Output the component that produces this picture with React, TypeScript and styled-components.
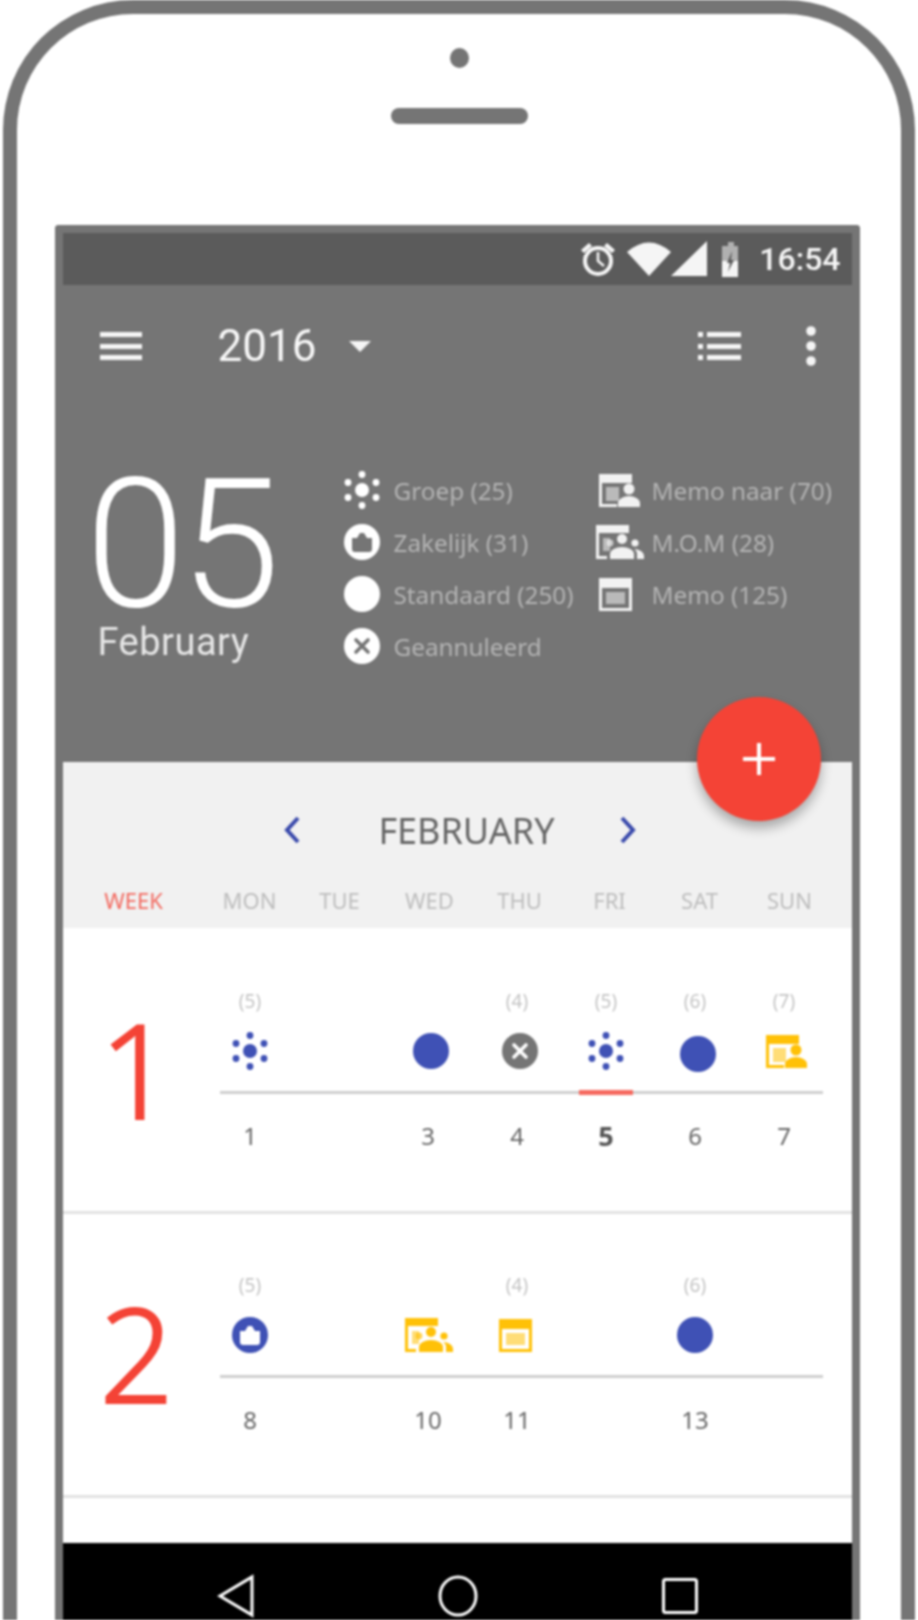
import { FC } from "react";
import styled, { createGlobalStyle } from "styled-components";

const GRAY = "#757575";
const BLUE = "#3f51b5";
const YELLOW = "#ffc107";
const RED = "#f44336";

const GlobalStyle = createGlobalStyle`
	html, body {
		margin: 0;
		padding: 0;
		background: #fff;
		font-family: "Noto Sans", "Open Sans", sans-serif;
	}
`;

const Page = styled.div`
	width: 918px;
	height: 1620px;
	overflow: hidden;
	filter: blur(0.9px);
`;

const Phone = styled.div`
	box-sizing: border-box;
	width: 912px;
	height: 1620px;
	margin-left: 3px;
	border: 14.5px solid ${GRAY};
	border-bottom: none;
	border-radius: 130px 130px 0 0;
	display: flex;
	flex-direction: column;
	align-items: center;
`;

const Camera = styled.div`
	width: 19px;
	height: 20px;
	margin-top: 34px;
	border-radius: 50%;
	background: ${GRAY};
`;

const Speaker = styled.div`
	width: 137px;
	height: 16px;
	margin-top: 40px;
	border-radius: 9px;
	background: ${GRAY};
`;

const Screen = styled.div`
	box-sizing: border-box;
	width: 805px;
	height: 1395px;
	margin: 101px 4px 0 0;
	border: 8px solid ${GRAY};
	border-bottom: none;
	border-radius: 4px 4px 0 0;
	display: flex;
	flex-direction: column;
	position: relative;
`;

const StatusBar = styled.div`
	height: 52px;
	flex: none;
	background: #5b5b5b;
	display: flex;
	align-items: center;
	justify-content: flex-end;
	padding-right: 11px;
	color: #f5f5f5;
`;

const StatusTime = styled.span`
	font-family: Roboto, sans-serif;
	font-weight: 500;
	font-size: 32px;
	margin-left: 16px;
`;

const Header = styled.div`
	height: 477px;
	flex: none;
	background: ${GRAY};
	color: #fff;
`;

const Toolbar = styled.div`
	height: 121px;
	display: flex;
	align-items: center;
	padding: 0 36px 0 37px;
	margin-bottom: 4px;
`;

const Year = styled.span`
	font-family: Roboto, sans-serif;
	font-size: 44px;
	margin-left: 76px;
	color: #f7f7f7;
`;

const Caret = styled.div`
	width: 0;
	height: 0;
	margin: 2px auto 0 33px;
	border-left: 11px solid transparent;
	border-right: 11px solid transparent;
	border-top: 11px solid #f5f5f5;
`;

const Hero = styled.div`
	display: flex;
`;

const DateBlock = styled.div`
	width: 281px;
	flex: none;
	padding: 60px 0 0 23px;
	box-sizing: border-box;
`;

const DayNumber = styled.div`
	font-family: Roboto, sans-serif;
	font-weight: 300;
	font-size: 180px;
	line-height: 150px;
	letter-spacing: -5px;
`;

const MonthName = styled.div`
	font-family: Roboto, sans-serif;
	font-weight: 400;
	font-size: 38px;
	line-height: 44px;
	margin-left: 12px;
	letter-spacing: 0.5px;
	color: #e6e6e6;
`;

const Legend = styled.div`
	display: grid;
	grid-template-rows: repeat(4, 52px);
	grid-template-columns: 252px auto;
	grid-auto-flow: column;
	margin-top: 54px;
`;

const LegendItem = styled.div`
	display: flex;
	align-items: center;
	font-size: 24.3px;
	color: #b4b4b4;
`;

const LegendIconBox = styled.div<{ $width: number; $inset?: number }>`
	width: ${(p) => p.$width}px;
	padding-left: ${(p) => p.$inset ?? 0}px;
	box-sizing: border-box;
	flex: none;
	display: flex;
`;

const Content = styled.div`
	flex: 1;
	min-height: 0;
	background: #fff;
	position: relative;
	overflow: hidden;
`;

const Fab = styled.div`
	position: absolute;
	top: 464px;
	left: 634px;
	z-index: 2;
	width: 124px;
	height: 124px;
	border-radius: 50%;
	background: ${RED};
	box-shadow: 0 7px 12px rgba(0, 0, 0, 0.3);
	display: flex;
	align-items: center;
	justify-content: center;
`;

const CalendarHead = styled.div`
	height: 166px;
	background: #f1f1f1;
	box-sizing: border-box;
	padding-top: 46px;
`;

const MonthRow = styled.div`
	display: flex;
	align-items: center;
	justify-content: center;
	height: 44px;
	padding-left: 6px;
`;

const MonthTitle = styled.div`
	font-size: 36px;
	color: #666;
	margin: 0 64px 0 77px;
`;

const WeekdayRow = styled.div`
	display: grid;
	grid-template-columns: 142px repeat(7, 90px);
	margin-top: 33px;
	font-size: 22px;
	line-height: 30px;
	color: #bdbdbd;
	text-align: center;
`;

const WeekLabel = styled.div`
	color: #f26a60;
`;

const WeekList = styled.div`
	padding-top: 2px;
`;

const WeekRow = styled.div`
	display: grid;
	grid-template-columns: 143px repeat(7, 89px);
	box-sizing: border-box;
	height: 284px;
	grid-template-rows: 30px 70px 12px 74px;
	padding-top: 56px;
	border-bottom: 3px solid #e2e2e2;
`;

const WeekNumber = styled.div`
	grid-column: 1;
	grid-row: 1 / -1;
	display: flex;
	align-items: center;
	justify-content: center;
	padding: 0 0 20px 5px;
	font-weight: 300;
	font-size: 130px;
	line-height: 1;
	color: ${RED};
	-webkit-text-stroke: 2px ${RED};
`;

const Count = styled.div<{ $col: number }>`
	grid-row: 1;
	grid-column: ${(p) => p.$col + 2};
	text-align: center;
	font-size: 19px;
	line-height: 30px;
	color: #c4c4c4;
`;

const IconCell = styled.div<{ $col: number; $nudge?: number; $drop?: number }>`
	grid-row: 2;
	grid-column: ${(p) => p.$col + 2};
	display: flex;
	align-items: center;
	justify-content: center;
	transform: translate(${(p) => p.$nudge ?? 0}px, ${(p) => p.$drop ?? 0}px);
`;

const WeekLine = styled.div`
	grid-row: 3;
	grid-column: 2 / -1;
	align-self: center;
	height: 3px;
	margin: 0 6px 0 14px;
	background: #cfcfcf;
`;

const TodayMark = styled.div`
	grid-row: 3;
	grid-column: 6;
	align-self: center;
	justify-self: center;
	width: 54px;
	height: 5px;
	background: #f66a60;
`;

const DayCell = styled.div<{ $col: number; $today?: boolean }>`
	grid-row: 4;
	grid-column: ${(p) => p.$col + 2};
	text-align: center;
	align-self: center;
	font-size: ${(p) => (p.$today ? 27 : 24)}px;
	font-weight: ${(p) => (p.$today ? 700 : 400)};
	color: ${(p) => (p.$today ? "#555" : "#666")};
`;

const NavBar = styled.div`
	position: absolute;
	left: 0;
	right: 0;
	bottom: 0;
	height: 77px;
	background: #000;
	display: flex;
	align-items: center;
	padding: 28px 0 0 154px;
	box-sizing: border-box;
`;

const NavGap = styled.div<{ $width: number }>`
	width: ${(p) => p.$width}px;
`;

type IconProps = { color: string; hole?: string };

const Sun: FC<IconProps> = ({ color }) => (
	<svg width="36" height="38" viewBox="0 0 36 38" fill={color}>
		<circle cx="18" cy="19" r="7" />
		<circle cx="18" cy="3.5" r="3.4" />
		<circle cx="18" cy="34.5" r="3.4" />
		<circle cx="4" cy="11.5" r="3.4" />
		<circle cx="32" cy="11.5" r="3.4" />
		<circle cx="4" cy="26.5" r="3.4" />
		<circle cx="32" cy="26.5" r="3.4" />
	</svg>
);

const Bag: FC<IconProps> = ({ color, hole }) => (
	<svg width="36" height="36" viewBox="0 0 36 36">
		<circle cx="18" cy="18" r="18" fill={color} />
		<path
			d="M8 14h5l3-5h4l3 5h5v11a3 3 0 0 1-3 3H11a3 3 0 0 1-3-3z"
			fill={hole}
		/>
	</svg>
);

const Dot: FC<IconProps> = ({ color }) => (
	<svg width="36" height="36" viewBox="0 0 36 36">
		<circle cx="18" cy="18" r="18" fill={color} />
	</svg>
);

const Cancelled: FC<IconProps> = ({ color, hole }) => (
	<svg width="36" height="36" viewBox="0 0 36 36">
		<circle cx="18" cy="18" r="18" fill={color} />
		<path
			d="M12 12l12 12M24 12L12 24"
			stroke={hole}
			strokeWidth="3.6"
			strokeLinecap="round"
		/>
	</svg>
);

const MemoTo: FC<IconProps> = ({ color }) => (
	<svg width="42" height="33" viewBox="0 0 42 33" fill={color}>
		<path d="M0 0h33v9H3v21h15v3H0z" />
		<rect x="7" y="13" width="13" height="14" opacity="0.55" />
		<circle cx="30" cy="15" r="5.5" />
		<path d="M19 33v-4c0-4 6-7 11-7s11 3 11 7v4z" />
	</svg>
);

const Mom: FC<IconProps> = ({ color }) => (
	<svg width="48" height="34" viewBox="0 0 48 34" fill={color}>
		<path d="M0 0h33v8H3v23h8v3H0z" />
		<rect x="7" y="13" width="7" height="13" opacity="0.55" />
		<circle cx="26" cy="14" r="5" />
		<path d="M14 34v-5c0-4 6-7 12-7s12 3 12 7v5z" />
		<circle cx="39" cy="18" r="3.6" />
		<path d="M41 34v-5c0-2-1-4-3-5 5 0 10 3 10 7v3z" />
		<circle cx="14" cy="18" r="3.4" opacity="0.7" />
	</svg>
);

const Memo: FC<IconProps> = ({ color }) => (
	<svg width="33" height="33" viewBox="0 0 33 33" fill={color}>
		<path fillRule="evenodd" d="M0 0h33v33H0zM3 10v20h27V10z" />
		<rect x="7" y="14" width="19" height="12" opacity="0.55" />
	</svg>
);

const Chevron: FC<{ left?: boolean }> = ({ left }) => (
	<svg width="18" height="28" viewBox="0 0 18 28" fill="none">
		<path
			d={left ? "M15 2L4 14l11 12" : "M3 2l11 12L3 26"}
			stroke="#3949ab"
			strokeWidth="4"
		/>
	</svg>
);

const Bars: FC = () => (
	<svg width="42" height="28" viewBox="0 0 42 28" fill="#f5f5f5">
		<rect y="0" width="42" height="5" />
		<rect y="12" width="42" height="5" />
		<rect y="23" width="42" height="5" />
	</svg>
);

const ListIcon: FC = () => (
	<svg width="43" height="28" viewBox="0 0 43 28" fill="#f5f5f5">
		<rect y="0" width="5" height="5" />
		<rect y="12" width="5" height="5" />
		<rect y="23" width="5" height="5" />
		<rect x="9" y="0" width="34" height="5" />
		<rect x="9" y="12" width="34" height="5" />
		<rect x="9" y="23" width="34" height="5" />
	</svg>
);

const MoreDots: FC = () => (
	<svg width="10" height="40" viewBox="0 0 10 40" fill="#f5f5f5">
		<circle cx="5" cy="5" r="4.8" />
		<circle cx="5" cy="20" r="4.8" />
		<circle cx="5" cy="35" r="4.8" />
	</svg>
);

const StatusIcons: FC = () => (
	<svg width="164" height="36" viewBox="0 0 164 36" fill="#f5f5f5">
		<circle cx="19" cy="20" r="13" fill="none" stroke="#f5f5f5" strokeWidth="4" />
		<path d="M19 11v9l6 5" fill="none" stroke="#f5f5f5" strokeWidth="2.6" />
		<path d="M2 9l8-7 3 3-8 7zM36 9l-8-7-3 3 8 7z" />
		<path d="M48 11Q70-8 92 11L70 35z" />
		<path d="M92 35L128 0v35z" />
		<path d="M149 5V1h6v4h4v31h-16V5z" opacity="0.55" />
		<path d="M143 20h16v16h-16z" />
		<path d="M153 10l-5 12h3l-2 9 6-12h-3z" fill="#5b5b5b" />
	</svg>
);

const Plus: FC = () => (
	<svg width="32" height="32" viewBox="0 0 32 32" fill="#fff">
		<rect x="14" width="4" height="32" />
		<rect y="14" width="32" height="4" />
	</svg>
);

const legendLeft = [
	{ text: "Groep (25)", Icon: Sun },
	{ text: "Zakelijk (31)", Icon: Bag },
	{ text: "Standaard (250)", Icon: Dot },
	{ text: "Geannuleerd", Icon: Cancelled },
];

const legendRight = [
	{ text: "Memo naar (70)", Icon: MemoTo, inset: 3 },
	{ text: "M.O.M (28)", Icon: Mom, inset: 0 },
	{ text: "Memo (125)", Icon: Memo, inset: 3 },
];

const weekdays = ["MON", "TUE", "WED", "THU", "FRI", "SAT", "SUN"];

const weeks = [
	{
		number: 1,
		counts: [
			[0, 5],
			[3, 4],
			[4, 5],
			[5, 6],
			[6, 7],
		],
		icons: [
			{ col: 0, Icon: Sun, color: BLUE },
			{ col: 2, Icon: Dot, color: BLUE, nudge: 3 },
			{ col: 3, Icon: Cancelled, color: GRAY, nudge: 3 },
			{ col: 4, Icon: Sun, color: BLUE },
			{ col: 5, Icon: Dot, color: BLUE, nudge: 3, drop: 3 },
			{ col: 6, Icon: MemoTo, color: YELLOW, nudge: 3 },
		],
		days: [
			[0, 1],
			[2, 3],
			[3, 4],
			[4, 5],
			[5, 6],
			[6, 7],
		],
	},
	{
		number: 2,
		counts: [
			[0, 5],
			[3, 4],
			[5, 6],
		],
		icons: [
			{ col: 0, Icon: Bag, color: BLUE },
			{ col: 2, Icon: Mom, color: YELLOW, nudge: 1 },
			{ col: 3, Icon: Memo, color: YELLOW, nudge: -2 },
			{ col: 5, Icon: Dot, color: BLUE },
		],
		days: [
			[0, 8],
			[2, 10],
			[3, 11],
			[5, 13],
		],
	},
];

export default function App() {
	return (
		<Page>
			<GlobalStyle />
			<Phone>
				<Camera />
				<Speaker />
				<Screen>
					<StatusBar>
						<StatusIcons />
						<StatusTime>16:54</StatusTime>
					</StatusBar>
					<Header>
						<Toolbar>
							<Bars />
							<Year>2016</Year>
							<Caret />
							<ListIcon />
							<NavGap $width={65} />
							<MoreDots />
						</Toolbar>
						<Hero>
							<DateBlock>
								<DayNumber>05</DayNumber>
								<MonthName>February</MonthName>
							</DateBlock>
							<Legend>
								{legendLeft.map(({ text, Icon }) => (
									<LegendItem key={text}>
										<LegendIconBox $width={50}>
											<Icon color="#fff" hole={GRAY} />
										</LegendIconBox>
										{text}
									</LegendItem>
								))}
								{legendRight.map(({ text, Icon, inset }) => (
									<LegendItem key={text}>
										<LegendIconBox $width={56} $inset={inset}>
											<Icon color="#f2f2f2" />
										</LegendIconBox>
										{text}
									</LegendItem>
								))}
							</Legend>
						</Hero>
					</Header>
					<Content>
						<CalendarHead>
							<MonthRow>
								<Chevron left />
								<MonthTitle>FEBRUARY</MonthTitle>
								<Chevron />
							</MonthRow>
							<WeekdayRow>
								<WeekLabel>WEEK</WeekLabel>
								{weekdays.map((d) => (
									<div key={d}>{d}</div>
								))}
							</WeekdayRow>
						</CalendarHead>
						<WeekList>
							{weeks.map((week) => (
								<WeekRow key={week.number}>
									<WeekNumber>{week.number}</WeekNumber>
									{week.counts.map(([col, n]) => (
										<Count key={col} $col={col}>
											({n})
										</Count>
									))}
									{week.icons.map(({ col, Icon, color, nudge, drop }) => (
										<IconCell key={col} $col={col} $nudge={nudge} $drop={drop}>
											<Icon color={color} hole="#fff" />
										</IconCell>
									))}
									<WeekLine />
									{week.number === 1 && <TodayMark />}
									{week.days.map(([col, n]) => (
										<DayCell key={col} $col={col} $today={n === 5}>
											{n}
										</DayCell>
									))}
								</WeekRow>
							))}
						</WeekList>
						<NavBar>
							<svg width="38" height="44" viewBox="0 0 38 44" fill="none">
								<path d="M35 3v38L3 22z" stroke="#fff" strokeWidth="3" />
							</svg>
							<NavGap $width={183} />
							<svg width="40" height="42" viewBox="0 0 40 42" fill="none">
								<ellipse cx="20" cy="21" rx="18" ry="19" stroke="#fff" strokeWidth="3" />
							</svg>
							<NavGap $width={184} />
							<svg width="36" height="36" viewBox="0 0 36 36" fill="none">
								<rect x="1.5" y="1.5" width="33" height="33" rx="2" stroke="#fff" strokeWidth="3" />
							</svg>
						</NavBar>
					</Content>
					<Fab>
						<Plus />
					</Fab>
				</Screen>
			</Phone>
		</Page>
	);
}
